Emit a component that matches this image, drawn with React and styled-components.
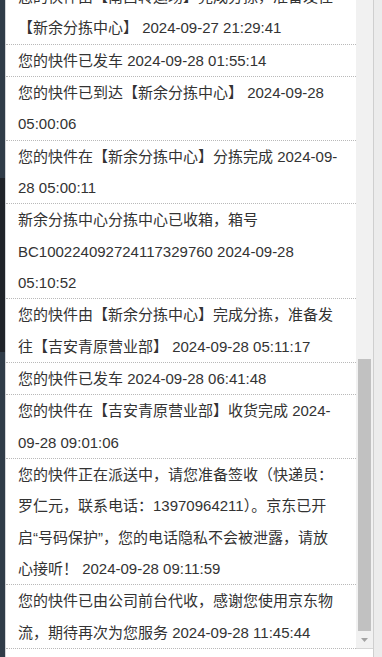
import React from "react";
import styled, { createGlobalStyle } from "styled-components";

const GlobalStyle = createGlobalStyle`
  html, body { margin: 0; padding: 0; background: #fff; overflow: hidden; }
  #root { height: 657px; }
`;

const Frame = styled.div`
  display: flex;
  width: 382px;
  height: 657px;
`;

const Sidebar = styled.div`
  width: 5px;
  flex-shrink: 0;
  display: flex;
  flex-direction: column;
  border-right: 1px solid #d2d4d7;
`;

const Band = styled.div`
  background: ${(p) => p.$tone};
  height: ${(p) => (p.$h ? `${p.$h}px` : "auto")};
  flex: ${(p) => (p.$h ? "0 0 auto" : "1")};
`;

const Content = styled.div`
  flex: 1;
  display: flex;
  flex-direction: column;
  background: #fff;
`;

const Body = styled.div`
  display: flex;
  height: 649px;
`;

const List = styled.ul`
  list-style: none;
  margin: 0;
  padding: 0;
  flex: 1;
  display: flex;
  flex-direction: column;
  justify-content: flex-end;
  overflow: hidden;
`;

const Item = styled.li`
  flex-shrink: 0;
  padding: 0 16px 0 12px;
  border-bottom: 1px dotted #b9b9b9;
  font-family: "Liberation Sans", "Noto Sans CJK SC", sans-serif;
  font-size: 15px;
  line-height: 31.33px;
  color: #333;
`;

const Track = styled.div`
  width: 17px;
  flex-shrink: 0;
  background: #f1f1f1;
  display: flex;
  flex-direction: column;
  justify-content: flex-end;
  align-items: center;
  border-bottom: 1px solid #d6d6d6;
`;

const Thumb = styled.div`
  width: 13px;
  height: 272px;
  background: #c1c1c1;
`;

const ArrowButton = styled.div`
  height: 17px;
  width: 17px;
  display: flex;
  align-items: center;
  justify-content: center;
`;

const Gutter = styled.div`
  width: 8px;
  flex-shrink: 0;
  background: #ececec;
  border-left: 1px solid #cfcfcf;
`;

const events = [
  "您的快件由【南昌转运场】完成分拣，准备发往【新余分拣中心】 2024-09-27 21:29:41",
  "您的快件已发车 2024-09-28 01:55:14",
  "您的快件已到达【新余分拣中心】 2024-09-28 05:00:06",
  "您的快件在【新余分拣中心】分拣完成 2024-09-28 05:00:11",
  "新余分拣中心分拣中心已收箱，箱号BC100224092724117329760 2024-09-28 05:10:52",
  "您的快件由【新余分拣中心】完成分拣，准备发往【吉安青原营业部】 2024-09-28 05:11:17",
  "您的快件已发车 2024-09-28 06:41:48",
  "您的快件在【吉安青原营业部】收货完成 2024-09-28 09:01:06",
  "您的快件正在派送中，请您准备签收（快递员：罗仁元，联系电话：13970964211）。京东已开启“号码保护”，您的电话隐私不会被泄露，请放心接听！ 2024-09-28 09:11:59",
  "您的快件已由公司前台代收，感谢您使用京东物流，期待再次为您服务 2024-09-28 11:45:44",
];

export default function App() {
  return (
    <>
      <GlobalStyle />
      <Frame>
        <Sidebar>
          <Band $tone="#303c48" $h={178} />
          <Band $tone="#1f2329" $h={174} />
          <Band $tone="#303c48" />
        </Sidebar>
        <Content>
          <Body>
            <List>
              {events.map((t, i) => (
                <Item key={i}>{t}</Item>
              ))}
            </List>
            <Track>
              <Thumb />
              <ArrowButton>
                <svg width="7" height="4" viewBox="0 0 7 4">
                  <polygon points="0,0 7,0 3.5,4" fill="#a3a3a3" />
                </svg>
              </ArrowButton>
            </Track>
          </Body>
        </Content>
        <Gutter />
      </Frame>
    </>
  );
}
